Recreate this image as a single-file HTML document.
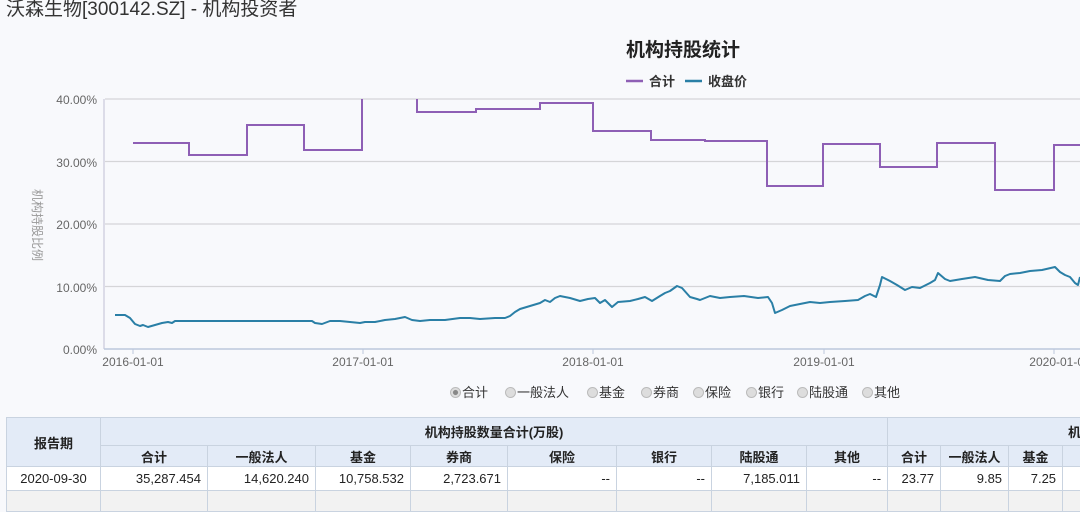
<!DOCTYPE html>
<html><head><meta charset="utf-8"><style>
body{margin:0;width:1080px;height:497px;overflow:hidden;background:#f8f9fc;font-family:"Liberation Sans","Noto Sans CJK SC",sans-serif;position:relative}
.t{position:absolute;left:6px;top:-6px;font-size:19px;color:#333}
svg{position:absolute;left:0;top:0}
table{position:absolute;left:6px;top:417px;width:1094px;border-collapse:collapse;font-size:13px;table-layout:fixed}
td,th{border:1px solid #c9d3e0;padding:0 6px;height:20px;white-space:nowrap;overflow:hidden}
th{background:#e3ebf7;font-weight:bold;color:#222;text-align:center}
td{text-align:right;background:#fff;color:#222}
.rd{position:absolute;top:382px;font-size:13px;color:#333}
.rd span{display:inline-block;width:11px;height:11px;border-radius:50%;background:#ddd;border:1px solid #bbb;box-sizing:border-box;vertical-align:-1px;margin-right:1px}
</style></head><body>
<div class="t">沃森生物[300142.SZ] - 机构投资者</div>
<svg width="1080" height="410" font-family="Liberation Sans,Noto Sans CJK SC,sans-serif">
<text x="683" y="56" font-size="19" font-weight="bold" text-anchor="middle" fill="#222">机构持股统计</text>
<line x1="626" y1="81" x2="643" y2="81" stroke="#8e5fb5" stroke-width="2.5"/><text x="649" y="86" font-size="13" font-weight="bold" fill="#333">合计</text>
<line x1="685" y1="81" x2="702" y2="81" stroke="#2a7fa6" stroke-width="2.5"/><text x="708" y="86" font-size="13" font-weight="bold" fill="#333">收盘价</text>
<g stroke="#d5d5d8" stroke-width="1.3"><line x1="105" y1="99" x2="1080" y2="99"/><line x1="105" y1="161.5" x2="1080" y2="161.5"/><line x1="105" y1="224" x2="1080" y2="224"/><line x1="105" y1="286.5" x2="1080" y2="286.5"/></g>
<line x1="104" y1="99" x2="104" y2="349" stroke="#ccd" stroke-width="1.3"/>
<line x1="104" y1="349" x2="1080" y2="349" stroke="#bcc8dc" stroke-width="1.5"/>
<g stroke="#bcc8dc"><line x1="133" y1="349" x2="133" y2="354"/><line x1="363" y1="349" x2="363" y2="354"/><line x1="593" y1="349" x2="593" y2="354"/><line x1="824" y1="349" x2="824" y2="354"/><line x1="1054" y1="349" x2="1054" y2="354"/></g>
<g font-size="12" fill="#666" text-anchor="end"><text x="97" y="104">40.00%</text><text x="97" y="167">30.00%</text><text x="97" y="229">20.00%</text><text x="97" y="292">10.00%</text><text x="97" y="354">0.00%</text></g>
<g font-size="12" fill="#666" text-anchor="middle"><text x="133" y="366">2016-01-01</text><text x="363" y="366">2017-01-01</text><text x="593" y="366">2018-01-01</text><text x="824" y="366">2019-01-01</text><text x="1060" y="366">2020-01-01</text></g>
<text transform="translate(33,225) rotate(90)" font-size="12" fill="#999" text-anchor="middle">机构持股比例</text>
<polyline fill="none" stroke="#8e5fb5" stroke-width="2" points="133,143 189,143 189,155 247,155 247,125 304,125 304,150 362,150 362,99"/>
<polyline fill="none" stroke="#8e5fb5" stroke-width="2" points="417,99 417,112 476,112 476,109 540,109 540,103 593,103 593,131 651,131 651,140 705,140 705,141 767,141 767,186 823,186 823,144 880,144 880,167 937,167 937,143 995,143 995,190 1054,190 1054,145 1080,145"/>
<polyline fill="none" stroke="#2a7fa6" stroke-width="2" stroke-linejoin="round" points="115,315 125,315 130,318 135,324 140,326 143,325 148,327 155,325 162,323 168,322 172,323 175,321 312,321 315,323 322,324 330,321 340,321 350,322 360,323 365,322 375,322 385,320 395,319 405,317 412,320 420,321 430,320 445,320 460,318 470,318 480,319 495,318 505,318 510,316 515,312 520,309 530,306 540,303 545,300 550,302 555,298 560,296 570,298 580,301 588,299 595,298 600,303 605,300 612,307 618,302 630,301 638,299 645,297 652,301 660,296 665,293 670,291 677,286 682,288 690,297 697,299 700,300 710,296 720,298 730,297 744,296 758,298 768,297 772,303 775,313 782,310 790,306 800,304 810,302 820,303 830,302 845,301 858,300 865,296 870,294 876,297 880,285 882,277 890,281 897,285 905,290 912,287 920,288 930,283 935,280 938,273 945,279 950,281 962,279 975,277 988,280 1000,281 1005,276 1010,274 1020,273 1030,271 1042,270 1055,267 1060,272 1065,275 1070,277 1075,283 1078,285 1080,277"/>
</svg>
<div class="rd" style="left:450px"><span style="background:radial-gradient(#888 35%,#ddd 45%)"></span>合计</div>
<div class="rd" style="left:505px"><span></span>一般法人</div>
<div class="rd" style="left:587px"><span></span>基金</div>
<div class="rd" style="left:641px"><span></span>券商</div>
<div class="rd" style="left:693px"><span></span>保险</div>
<div class="rd" style="left:746px"><span></span>银行</div>
<div class="rd" style="left:797px"><span></span>陆股通</div>
<div class="rd" style="left:862px"><span></span>其他</div>
<table>
<colgroup><col style="width:94px"><col style="width:107px"><col style="width:108px"><col style="width:95px"><col style="width:97px"><col style="width:109px"><col style="width:95px"><col style="width:95px"><col style="width:81px"><col style="width:53px"><col style="width:68px"><col style="width:54px"><col style="width:38px"></colgroup>
<tr style="height:28px"><th rowspan="2">报告期</th><th colspan="8">机构持股数量合计(万股)</th><th colspan="4" style="text-align:right">机构</th></tr>
<tr><th>合计</th><th>一般法人</th><th>基金</th><th>券商</th><th>保险</th><th>银行</th><th>陆股通</th><th>其他</th><th>合计</th><th>一般法人</th><th>基金</th><th></th></tr>
<tr style="height:24px"><td style="text-align:center">2020-09-30</td><td>35,287.454</td><td>14,620.240</td><td>10,758.532</td><td>2,723.671</td><td>--</td><td>--</td><td>7,185.011</td><td>--</td><td>23.77</td><td>9.85</td><td>7.25</td><td></td></tr>
<tr><td style="background:#f2f2f2"></td><td style="background:#f2f2f2"></td><td style="background:#f2f2f2"></td><td style="background:#f2f2f2"></td><td style="background:#f2f2f2"></td><td style="background:#f2f2f2"></td><td style="background:#f2f2f2"></td><td style="background:#f2f2f2"></td><td style="background:#f2f2f2"></td><td style="background:#f2f2f2"></td><td style="background:#f2f2f2"></td><td style="background:#f2f2f2"></td><td style="background:#f2f2f2"></td></tr>
</table>
</body></html>
